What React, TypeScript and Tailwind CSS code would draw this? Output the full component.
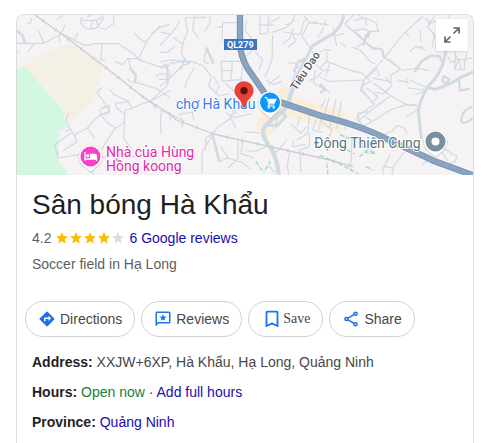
import type { ReactNode } from "react";

const STAR = "M12 17.27 18.18 21l-1.64-7.03L22 9.24l-7.19-.61L12 2 9.19 8.63 2 9.24l5.46 4.73L5.82 21z";

// road tiles, each one drawn on a grid three times finer than the map
const westRoads = [
  "M82 71l11-3 2-14M170 58l10-8M188 45l-4 10M195 76l-12 26-52 28-80 0M113 87l19 43M103 130l-18 25M51 153l8 4M178 104l1 26M233 99l-10 25",
  "M187 102l60 31q18 6 34-2l74 0 50 34 10 14 60 20q20 6 35-4M307 132l-5 44 10 4 2 5M345 185l24 9 14-18 28 0M415 178l24-52 20-30 22-14 29-10M404 100l16 18 18 8M480 78l-22 24",
  "M247 52q-10 10-2 20 12 20 36 14 14-4 20-18l12-14M242 60l36 2 20-4 14-12M278 62l-6 24M288 60l8 24M300 84q20 8 30-6l12-8-1-25M262 50l14-4",
  "M386 178l5 26M408 248l20 5 40 12 42 28M382 236l10 10 16 2M450 304l52-48 8-40-14-18M470 230l6-8 32 0M478 238l30 0M502 256l1-60M450 304l60-32M450 304l20 22",
  "M331 268l8 14 42 20 14 20M308 262l-14 10-2 6 24 36M346 310l34-4 8-4M346 310l4 14 24 18M376 330l22-6 26-12 26-8M299 330l6 14 20-6M299 330l24-14",
  "M376 330l-4 38-28 18-40 64M302 344l-16 12-24 28-40 22M302 344l18 22 26 18M262 384l22 32M374 366l-3 50 24 30M484 334l-3 28 3 42M207 340l-8 14 0 14 24 38 8 20-42 26M196 396l14-9M214 398l-50 36 10 40 62-10 14-6M172 474l4-22M290 475l70-10M278 510l0 15M380 470l26 0",
];

const midRoads = [
  "M148 50l4 16-18 28M60 62q-10 20-24 36l-36 38M40 112l28 22-4 26 20 36M0 96l34 8M75 54l8 40-16 40M75 54l64-2M104 45l-6 44 18 28M190 68l40 0M188 68l-2 56M170 82l18-2",
  "M0 186l28-6 66 4 36 14M0 204l20-12 2 50 44-44 26-10M22 242l-22 16M28 190l50-6 30 2M104 200l-22 40-8 26M140 140l-8 44 14 8M0 156l22 2 24-22M76 174l-14 36",
  "M184 184l66 0-8 60M184 184l2 60 60-6M186 212l30 0 0-28M216 212l-4 28M196 250l24 22 30-8M160 228l18 30-12 24M130 198l24 32-8 28 32 30 30-8M196 338l26 14 52-10M204 316l26 26M208 346l20 40",
  "M260 58l-4 36 18 18 0 44-18 12M300 45l0 58 24-4 0-20M325 45l0 26 36-20M294 74l48 2M334 98l46-16 24-24M406 45l-12 24-18 6M338 106l-2 76-22 50M286 156l22 22-12 34M366 134l24-20 10-30M370 96l50 8 12-40 10-8M398 104l10 20-24 16",
  "M430 45l20 24 24-4M446 68l60 6M446 68l-20 40 22 32 12 20M492 80l-18 32M360 226l-34 28M386 188l22 2 14 26M408 214l-14 36M440 210l22-20 24 20 24 2M466 210l-6 38 50 30M446 242l30-14 12-16M320 240l20 14 26-10",
  "M0 330l32 12-2 20M30 342l42 20-6 20M56 344l40-8 6 24M160 400l14-20 34-22 14-24M160 400l-22 14-2 38M154 410l-28 46 0 62M174 486l30-12 44 14 24 20M234 416l0 60-30 28M182 440l24 34M250 420l-8 40 40 14M328 436l-40 18-28-2M380 420l-24 30-20 14M400 420l-2 20 40-6M448 400l0 40-30 10M346 520l-20-24M390 452l-8 44 4 29M420 446l2 70M250 396l48 2",
  "M394 372l28 28 18-20M420 350l-8 30M448 340l-4 60-34 20M468 360l-10 30 30 8M354 338l-8 50M484 340l-6 50",
];

const eastRoads = [
  "M74 72l28 24M74 72l26-26M94 50l8-5M102 62l34-8 32 14 8 26-30 0-12-6M116 45l20 12 4 20M100 92l36-6M40 82l10 56M18 78l-4-20M44 108l28-8M60 128l18 12M0 156l18-8 14 4M98 142l22 8 30 34 16 8M128 130l-16 10",
  "M192 172l50 36M190 178l-56 58-8 32 36 46-48 32 8 24M192 176l58-74 60-54M256 96l10 14M300 90l4 36M330 60l-6 22 20 22-8 38M316 52l12 18 40-12M345 45l-18 32M290 140l26 10M336 96l14 24-4 26M310 142l-24-2-16 14",
  "M20 152l0 32-20 20M20 184l68 26 18 4M28 190l-10 38M0 232l28 12 104-4 40-36M98 214l26 4 28 26-22 12M170 206l8 24M206 176l36 32-30 18 2 32-24 24-26-6M156 234l54 10M196 230l14 20M234 240l30 8-6-16M246 212l44-8 36 8M270 240l48 22M262 264l54 6M286 284l28-12",
  "M160 250l54 38 46 26 36 4M212 288l-18 12-52 40-28 24M262 316l28-4M260 314l-48 16-54 34-28 14-20-20 4-18 30-6M258 352l36-24M150 296l-28-24 6-28M140 264l34 26-18 18M134 350l20 12",
  "M387 45l-2 70M404 160l12 20-12 26M404 180l30-2 0 30-30 2zM416 180l8 28M390 134l16 14 0 30M432 178l24-4M384 120l20-8 24 14M440 158l-4 26M384 170l10 18 26-12",
  "M172 405l14 2 30-14 16-16 20 6 10 18M190 408l-14 22M348 430l50 32 12 6-4 16-16 6M360 450l24 32M326 478l-18 14M210 464l-18 36 28 4-4 21M190 500l-2 25M254 455l-26 34-10 14M82 410l-30 30M96 420l-4 96",
  "M28 292l-18 60M48 300l-20 86M64 304l-14 82M82 354l-8 34M16 300l-14 24M0 360l36 30-8 20",
];

const railway = "M105 45l100 72 115 88 110 87 80 50 20 18 110 42 170 38 180 40 70 20";
const highway = "M720 40v100q8 50 36 84l48 70 160 54q120 30 190 66l146 68 130 48";

function Roads({ paths }: { paths: string[] }) {
  return (
    <g fill="none" stroke="#cfdae4" strokeWidth="3.5" strokeLinejoin="round">
      {paths.map((d) => (
        <path key={d} d={d} />
      ))}
    </g>
  );
}

function Pin({ x, y, color, children }: { x: number; y: number; color: string; children: ReactNode }) {
  return (
    <g transform={`translate(${x} ${y})`}>
      <path d="M0 16.500l-7.500-6.500a12 12 0 1 1 15 0z" fill="#8d9196" opacity=".45" />
      <path d="M0 15.500l-7.500-6.500a11.500 11.500 0 1 1 15 0z" fill="#fff" />
      <circle r="10" fill={color} />
      {children}
    </g>
  );
}

function AreaMap() {
  return (
    <svg
      viewBox="17 15 456 160"
      preserveAspectRatio="xMidYMid slice"
      className="block h-40 w-full bg-[#f5f3f4]"
      role="img"
      aria-label="Map"
    >
      <g transform="scale(.33333)" strokeLinejoin="round">
        <path fill="#d3f8e2" d="M48 211l24-12 108 116 12 30 5 30 8 7-27 10-6 86 35 47H48z" />
        <path fill="#f5f0e5" d="M72 199l48-37 85-32 65 30 38 22-8 68-15 50-75 72-8 4-7-26-10-35z" />
        <path fill="#f8eedb" d="M845 250l24 14-8 22 177 49-20 63-158-48-32 36-28 30-37-32 20-44 34-30z" />
        <Roads paths={westRoads} />
        <g transform="translate(480)">
          <Roads paths={midRoads} />
        </g>
        <g transform="translate(960)">
          <Roads paths={eastRoads} />
        </g>

        <g fill="none" stroke="#d1dbe3" strokeWidth="8">
          <path d="M51 92l16 14 9 24M389 203l18 22-2 24" />
          <path d="M305 325l20-8 3 18-20 8" strokeWidth="6" />
          <path d="M620 146l20 44M638 406l20 78M882 216l12-30 18-8-10 30" />
          <path d="M1064 96l52 48 30 4 6 26M1108 96l-10 12-8 30M1112 92l-10 22" strokeWidth="7" />
          <path d="M1244 216l20-32 26-16 28 0 10 20M960 252l16 16-16 10" />
          <path d="M1332 228l16 10-10 14-12-10zM1376 238l4 34 30-6M1418 320q-34 10-34 44 10 12 34-10" strokeWidth="7" />
        </g>
        <g fill="none" stroke="#d0dae2">
          <path d="M1345 115l-12 60q-8 44-50 86-22 38-28 70 2 30 10 86" strokeWidth="9" />
          <path d="M1280 262l26 6q50-16 76-36l38-16" strokeWidth="9" />
          <path d="M1032 45q-8 38-38 60l-36 20-20 12-42 80" strokeWidth="9" />
          <path d="M896 217l-28 76q2 20-24 44-44 32-54 50-6 20 20 54 22 32 26 84" strokeWidth="13" />
          <path d="M845 330l12 20-24 26-28 0" strokeWidth="8" />
        </g>
        <g fill="none">
          <path d={railway} stroke="#c9ced2" strokeWidth="4" />
          <path d={railway} stroke="#c9ced2" strokeWidth="12" strokeDasharray="3 44" strokeDashoffset="18" />
          <path d="M768 484l14 22 12 12M796 510l14-26M1020 404l74 30M1024 440l40 22M1078 470l26-20 20 8M960 466l60 26 56 30M980 490l4 34M1086 434l12 24 28 2M1098 500l22 10" stroke="#9cdcc0" strokeWidth="4" strokeDasharray="14 6" />
        </g>

        <g fill="none">
          <path d={highway} stroke="#6f90b5" strokeWidth="19" />
          <path d={highway} stroke="#8aa4c0" strokeWidth="14" />
        </g>
      </g>

      <path fill="#3a76c4" d="M224 39h33v11h-33z" />
      <g className="font-[Roboto,sans-serif] text-[14px]">
        <text x="227" y="48" fill="#fff" className="text-[9px] font-bold">QL279</text>
        <g stroke="#fff" strokeWidth="2" strokeLinejoin="round" className="[paint-order:stroke]">
          <text x="176" y="109" fill="#3a7de0">chợ Hà Khẩu</text>
          <text fill="#e02aa8">
            <tspan x="106" y="157">Nhà của Hùng</tspan>
            <tspan x="106" y="171">Hồng koong</tspan>
          </text>
          <text x="314" y="148" fill="#5a7684">Động Thiên Cung</text>
          <text transform="translate(296 91) rotate(-56)" fill="#4f5a64" className="text-[11px] font-medium">Tiêu Dao</text>
        </g>
      </g>

      {/* hotel */}
      <Pin x={90.500} y={156.500} color="#fb3fc8">
        <path d="M-5.500-4.500v8.500M-5.500 2.500h11.500M6 4.500v-5q0-1.500-1.500-1.500h-4.500v4" fill="none" stroke="#fff" strokeWidth="1.300" />
        <path d="M0-2h4.500q1.500 0 1.500 1.500v3h-6z" fill="#fff" />
        <circle cx="-2.800" cy="-.8" r="1.600" fill="#fff" />
      </Pin>

      {/* market */}
      <Pin x={270} y={102.500} color="#0a95ff">
        <path d="M-5.500-5h2l2.700 6.500h4.600l2.200-4.700h-8.500M-.8 1.500l-1 2h6.600" fill="none" stroke="#fff" strokeWidth="1.200" />
        <path d="M-2.800-3.200h8.300l-2 4.200h-4.500z" fill="#fff" />
        <circle cx="-1.200" cy="5.200" r="1.100" fill="#fff" />
        <circle cx="3.800" cy="5.200" r="1.100" fill="#fff" />
      </Pin>

      {/* cave */}
      <Pin x={435.500} y={141.500} color="#78909c">
        <circle r="4" fill="#fff" />
      </Pin>

      {/* selected place */}
      <path d="M244 107c-.8 0-1-.5-1.200-1.300-.8-4-3-5.700-5.300-8.500-1.800-2.200-2.800-4-2.800-6.500a9.300 9.300 0 0 1 18.600 0c0 2.500-1 4.300-2.800 6.500-2.300 2.800-4.500 4.500-5.300 8.500-.2.800-.4 1.300-1.200 1.300z" fill="#ea4335" stroke="#c5221f" strokeWidth=".4" />
      <circle cx="244" cy="90.800" r="3.700" fill="#591412" />
    </svg>
  );
}

function Action({ icon, children }: { icon: ReactNode; children: ReactNode }) {
  return (
    <button
      type="button"
      className="flex h-9 shrink-0 items-center gap-1 rounded-full border border-[#d2d2d2] px-3 text-sm text-[#474747] hover:bg-gray-50"
    >
      {icon}
      {children}
    </button>
  );
}

export default function App() {
  return (
    <main className="flex min-h-screen bg-white pt-[14px] pr-[13px] pl-4 font-['Liberation_Sans',Arial,sans-serif] text-sm">
      <article className="min-w-0 flex-1 overflow-hidden rounded-t-lg border border-b-0 border-[#dadce0]">
        <div className="relative">
          <AreaMap />
          <button
            type="button"
            aria-label="Expand map"
            className="absolute top-1 right-[5px] flex size-8 items-center justify-center rounded-xs bg-white shadow-sm"
          >
            <svg viewBox="0 0 18 18" className="size-[18px]" fill="none" stroke="#666" strokeWidth="1.700">
              <path d="M10.500 2H16v5.500M16 2l-5.500 5.500M2 10.500V16h5.500M2 16l5.500-5.500" />
            </svg>
          </button>
        </div>

        <header className="px-[15px] pt-3">
          <h1 className="text-[28px] leading-9 text-[#1f1f1f]">Sân bóng Hà Khẩu</h1>
          <div className="mt-[5px] flex h-5 items-center gap-1 text-[#5e5e5e]">
            <span>4.2</span>
            <span className="flex" role="img" aria-label="Rated 4.2 out of 5">
              {[1, 2, 3, 4, 5].map((n) => (
                <svg key={n} viewBox="2 2 20 20" className="mx-px size-3" fill={n <= 4 ? "#fbbc04" : "#dadce0"}>
                  <path d={STAR} />
                </svg>
              ))}
            </span>
            <a href="#reviews" className="text-[#1a0dab] hover:underline">6 Google reviews</a>
          </div>
          <p className="mt-[6px] leading-5 text-[#5e5e5e]">Soccer field in Hạ Long</p>
        </header>

        <div className="mt-[27px] flex gap-[6px] px-2">
          <Action
            icon={
              <svg viewBox="0 0 24 24" className="size-[18px]" fill="#1a73e8">
                <path d="M21.710 11.290l-9-9a1 1 0 0 0-1.410 0l-9 9a1 1 0 0 0 0 1.410l9 9a1 1 0 0 0 1.410 0l9-9a1 1 0 0 0 0-1.410zM14 14.500V12h-4v3H8v-4a1 1 0 0 1 1-1h5V7.500l3.500 3.500z" />
              </svg>
            }
          >
            Directions
          </Action>
          <Action
            icon={
              <svg viewBox="0 0 24 24" className="size-[18px]" fill="#1a73e8">
                <path d="M20 2H4a2 2 0 0 0-2 2v18l4-4h14a2 2 0 0 0 2-2V4a2 2 0 0 0-2-2zm0 14H5.200L4 17.200V4h16z" />
                <path d="M12 14.200l-2.900 1.700.8-3.300-2.600-2.200 3.400-.3L12 7l1.300 3.100 3.400.3-2.600 2.200.8 3.300z" transform="translate(0 -1.500)" />
              </svg>
            }
          >
            Reviews
          </Action>
          <button
            type="button"
            className="flex h-9 shrink-0 items-center rounded-full border border-[#d2d2d2] px-3 font-['Liberation_Serif',serif] text-sm text-[#474747] hover:bg-gray-50"
          >
            <svg viewBox="0 0 24 24" className="size-[22px]" fill="#1a73e8">
              <path d="M17 3H7a2 2 0 0 0-2 2v16l7-3 7 3V5a2 2 0 0 0-2-2zm0 15l-5-2.180L7 18V5h10z" />
            </svg>
            Save
          </button>
          <Action
            icon={
              <svg viewBox="0 0 24 24" className="size-[18px]" fill="none" stroke="#1a73e8" strokeWidth="2">
                <circle cx="18" cy="5" r="2.100" />
                <circle cx="6" cy="12" r="2.100" />
                <circle cx="18" cy="19" r="2.100" />
                <path d="M8 10.900l8-4.700M8 13.100l8 4.700" />
              </svg>
            }
          >
            Share
          </Action>
        </div>

        <div className="mt-[15px] flex flex-col gap-[10px] px-[15px] leading-5 text-[#474747]">
          <p>
            <b className="text-[#1f1f1f]">Address:</b> XXJW+6XP, Hà Khẩu, Hạ Long, Quảng Ninh
          </p>
          <p>
            <b className="text-[#1f1f1f]">Hours:</b> <span className="text-[#188038]">Open now</span> ·{" "}
            <a href="#hours" className="text-[#1a0dab] hover:underline">Add full hours</a>
          </p>
          <p>
            <b className="text-[#1f1f1f]">Province:</b>{" "}
            <a href="#province" className="text-[#1a0dab] hover:underline">Quảng Ninh</a>
          </p>
        </div>
      </article>
    </main>
  );
}
